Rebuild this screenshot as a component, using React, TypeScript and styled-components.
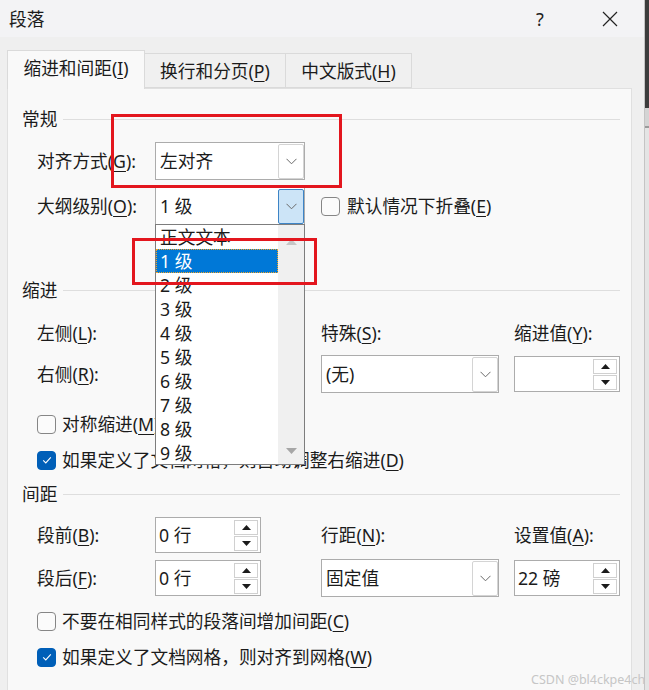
import React from "react";
import styled, { createGlobalStyle } from "styled-components";

const GlobalStyle = createGlobalStyle`
  html, body {
    margin: 0;
    padding: 0;
  }
  body {
    font-family: "Noto Sans", "Noto Sans CJK SC", sans-serif;
    background: #efefef;
    color: #1b1b1b;
    overflow: hidden;
  }
`;

const Screen = styled.div`
  position: relative;
  display: flex;
  width: 649px;
  height: 690px;
  overflow: hidden;
  font-size: 17.7px;
`;

const Dialog = styled.div`
  width: 644px;
  height: 690px;
  border-right: 1px solid #c4c4c4;
  background: #efefef;
  display: flex;
  flex-direction: column;
  overflow: hidden;
`;

const Backdrop = styled.div`
  flex: 1;
  background: linear-gradient(#3c3c3c 0 108px, #d4d4d4 108px 126px, #9a9a9a 126px 128px, #e4e4e4 128px);
`;

const TitleBar = styled.div`
  height: 37px;
  flex-shrink: 0;
  display: flex;
  align-items: center;
  padding-left: 9px;
  background: #f3f3f5;
`;

const Title = styled.span`
  line-height: 24px;
  flex: 1;
`;

const TitleButton = styled.div`
  width: 46px;
  height: 37px;
  display: flex;
  align-items: center;
  justify-content: center;
  font-size: 18px;
  color: #222;
`;

const CloseButton = styled(TitleButton)`
  margin-left: 24px;
  margin-right: 11px;
`;

const TabsArea = styled.div`
  flex: 1;
  display: flex;
  flex-direction: column;
  padding: 13px 12px 0 7px;
`;

const TabList = styled.div`
  display: flex;
  align-items: flex-end;
  height: 38px;
  position: relative;
  z-index: 1;
`;

const Tab = styled.div<{ $active?: boolean; $w: number }>`
  box-sizing: border-box;
  width: ${(p) => p.$w}px;
  height: ${(p) => (p.$active ? 39 : 35)}px;
  margin-bottom: ${(p) => (p.$active ? -1 : 0)}px;
  margin-left: -1px;
  border: 1px solid #dadada;
  border-bottom: ${(p) => (p.$active ? "none" : "1px solid #dadada")};
  background: ${(p) => (p.$active ? "#f9f9f9" : "#f0f0f0")};
  display: flex;
  align-items: center;
  justify-content: center;
  line-height: 24px;
  padding-bottom: ${(p) => (p.$active ? 4 : 0)}px;
  &:first-child {
    margin-left: 0;
  }
`;

const Panel = styled.div`
  flex: 1;
  border: 1px solid #e0e0e0;
  border-bottom: none;
  background: #f9f9f9;
  display: flex;
  flex-direction: column;
`;

const SectionHeader = styled.div<{ $top: number }>`
  display: flex;
  align-items: center;
  height: 24px;
  line-height: 24px;
  margin-top: ${(p) => p.$top}px;
  padding: 0 11px 0 14px;
  flex-shrink: 0;
`;

const HeaderLine = styled.div`
  flex: 1;
  height: 1px;
  margin-left: 6px;
  background: #dedede;
`;

const FormGrid = styled.div<{ $top: number; $gap: number }>`
  display: grid;
  grid-template-columns: 118px 166px 193px 106px;
  grid-auto-rows: 38px;
  row-gap: ${(p) => p.$gap}px;
  margin-top: ${(p) => p.$top}px;
  padding-left: 29px;
  flex-shrink: 0;
`;

const Label = styled.span<{ $col?: number }>`
  grid-column: ${(p) => p.$col ?? 1};
  align-self: center;
  line-height: 24px;
  white-space: nowrap;
`;

const U = styled.span`
  text-decoration: underline;
  text-decoration-thickness: 1px;
  text-underline-offset: 3px;
`;

const Cell = styled.div<{ $col: number; $span?: number }>`
  grid-column: ${(p) => p.$col} / span ${(p) => p.$span ?? 1};
  align-self: center;
  position: relative;
  display: flex;
  align-items: center;
`;

const SelectBox = styled.div<{ $w: number }>`
  box-sizing: border-box;
  width: ${(p) => p.$w}px;
  height: 38px;
  border: 1px solid #acacac;
  background: #fff;
  display: flex;
  align-items: center;
  padding-left: 4px;
`;

const SelectValue = styled.span`
  flex: 1;
  line-height: 24px;
  white-space: nowrap;
`;

const DropButton = styled.div<{ $active?: boolean }>`
  box-sizing: border-box;
  width: 26px;
  height: 35px;
  border: 1px solid ${(p) => (p.$active ? "#3d84c6" : "#d4d4d4")};
  border-radius: 2px;
  background: ${(p) => (p.$active ? "#cce4f7" : "#fff")};
  display: flex;
  align-items: center;
  justify-content: center;
`;

const SpinBox = styled.div`
  box-sizing: border-box;
  width: 106px;
  height: 36px;
  border: 1px solid #acacac;
  background: #fff;
  display: flex;
  align-items: center;
  padding-left: 3px;
`;

const SpinButtons = styled.div`
  margin-left: auto;
  margin-right: 2px;
  display: flex;
  flex-direction: column;
  gap: 1px;
`;

const SpinButton = styled.div`
  box-sizing: border-box;
  width: 24px;
  height: 15px;
  border: 1px solid #d0d0d0;
  background: #fff;
  display: flex;
  align-items: center;
  justify-content: center;
`;

const ListPopup = styled.div`
  position: absolute;
  top: 37px;
  left: 0;
  z-index: 10;
  box-sizing: border-box;
  width: 150px;
  height: 241px;
  border: 1px solid #7d7d7d;
  background: #fff;
  display: flex;
  overflow: hidden;
`;

const ListItems = styled.div`
  width: 122px;
`;

const ListItem = styled.div<{ $selected?: boolean }>`
  box-sizing: border-box;
  height: 24px;
  line-height: 23px;
  padding-left: 3px;
  white-space: nowrap;
  background: ${(p) => (p.$selected ? "#0078d7" : "transparent")};
  color: ${(p) => (p.$selected ? "#fff" : "#1b1b1b")};
  border: 1px dotted ${(p) => (p.$selected ? "#f5a623" : "transparent")};
`;

const ScrollTrack = styled.div`
  flex: 1;
  background: #f0f0f0;
  display: flex;
  flex-direction: column;
  align-items: center;
  justify-content: space-between;
  padding: 14px 0 10px;
`;

const CheckRow = styled.div<{ $top: number }>`
  display: flex;
  align-items: center;
  gap: 6px;
  height: 28px;
  margin-top: ${(p) => p.$top}px;
  padding-left: 29px;
  flex-shrink: 0;
`;

const InlineCheck = styled.div`
  display: flex;
  align-items: center;
  gap: 7px;
`;

const CheckText = styled.span`
  line-height: 24px;
  white-space: nowrap;
`;

const Box = styled.div<{ $checked?: boolean }>`
  box-sizing: border-box;
  width: 19px;
  height: 19px;
  border-radius: 4px;
  border: 1px solid ${(p) => (p.$checked ? "#005fb8" : "#868686")};
  background: ${(p) => (p.$checked ? "#005fb8" : "#fbfbfb")};
  display: flex;
  align-items: center;
  justify-content: center;
  flex-shrink: 0;
`;

const RedMark = styled.div<{ $x: number; $y: number; $w: number; $h: number }>`
  position: absolute;
  left: ${(p) => p.$x}px;
  top: ${(p) => p.$y}px;
  width: ${(p) => p.$w}px;
  height: ${(p) => p.$h}px;
  box-sizing: border-box;
  border: 3px solid #e3161e;
  z-index: 20;
  pointer-events: none;
`;

const Watermark = styled.div`
  position: absolute;
  left: 531px;
  top: 671px;
  font-family: "Noto Sans", sans-serif;
  font-size: 12.5px;
  color: #c6c6c6;
  white-space: nowrap;
`;

const Chevron = () => (
  <svg width="11" height="7" viewBox="0 0 11 7">
    <polyline points="0.5,0.8 5.5,5.8 10.5,0.8" fill="none" stroke="#6a6a6a" strokeWidth="1" />
  </svg>
);

const Tri = ({ up, color = "#1b1b1b", w = 9, h = 5 }: { up?: boolean; color?: string; w?: number; h?: number }) => (
  <svg width={w} height={h} viewBox={`0 0 ${w} ${h}`}>
    <polygon points={up ? `0,${h} ${w / 2},0 ${w},${h}` : `0,0 ${w},0 ${w / 2},${h}`} fill={color} />
  </svg>
);

const Select: React.FC<{ value: string; width: number; active?: boolean }> = ({ value, width, active }) => (
  <SelectBox $w={width}>
    <SelectValue>{value}</SelectValue>
    <DropButton $active={active}>
      <Chevron />
    </DropButton>
  </SelectBox>
);

const Spinner: React.FC<{ value: string }> = ({ value }) => (
  <SpinBox>
    <SelectValue>{value}</SelectValue>
    <SpinButtons>
      <SpinButton>
        <Tri up />
      </SpinButton>
      <SpinButton>
        <Tri />
      </SpinButton>
    </SpinButtons>
  </SpinBox>
);

const Check: React.FC<{ checked?: boolean }> = ({ checked }) => (
  <Box $checked={checked}>
    {checked && (
      <svg width="12" height="12" viewBox="0 0 12 12">
        <polyline points="2.2,6.3 4.8,8.9 9.8,3.4" fill="none" stroke="#fff" strokeWidth="1.1" />
      </svg>
    )}
  </Box>
);

const levels = ["正文文本", "1 级", "2 级", "3 级", "4 级", "5 级", "6 级", "7 级", "8 级", "9 级"];

export default function App() {
  return (
    <>
      <GlobalStyle />
      <Screen>
        <Dialog>
          <TitleBar>
            <Title>段落</Title>
            <TitleButton>?</TitleButton>
            <CloseButton>
              <svg width="16" height="16" viewBox="0 0 16 16">
                <path d="M1 1 L15 15 M15 1 L1 15" stroke="#222" strokeWidth="1.2" />
              </svg>
            </CloseButton>
          </TitleBar>
          <TabsArea>
            <TabList>
              <Tab $active $w={138}>
                缩进和间距(<U>I</U>)
              </Tab>
              <Tab $w={142}>
                换行和分页(<U>P</U>)
              </Tab>
              <Tab $w={127}>
                中文版式(<U>H</U>)
              </Tab>
            </TabList>
            <Panel>
              <SectionHeader $top={18}>
                常规
                <HeaderLine />
              </SectionHeader>
              <FormGrid $top={11} $gap={7}>
                <Label>
                  对齐方式(<U>G</U>):
                </Label>
                <Cell $col={2}>
                  <Select value="左对齐" width={150} />
                </Cell>
                <Label>
                  大纲级别(<U>O</U>):
                </Label>
                <Cell $col={2}>
                  <Select value="1 级" width={150} active />
                  <ListPopup>
                    <ListItems>
                      {levels.map((l, i) => (
                        <ListItem key={l} $selected={i === 1}>
                          {l}
                        </ListItem>
                      ))}
                    </ListItems>
                    <ScrollTrack>
                      <Tri up color="#c6c6c6" w={11} h={6} />
                      <Tri color="#a6a6a6" w={11} h={6} />
                    </ScrollTrack>
                  </ListPopup>
                </Cell>
                <Cell $col={3} $span={2}>
                  <InlineCheck>
                    <Check />
                    <CheckText>
                      默认情况下折叠(<U>E</U>)
                    </CheckText>
                  </InlineCheck>
                </Cell>
              </FormGrid>

              <SectionHeader $top={53}>
                缩进
                <HeaderLine />
              </SectionHeader>
              <FormGrid $top={12} $gap={3}>
                <Label>
                  左侧(<U>L</U>):
                </Label>
                <Cell $col={2}>
                  <Spinner value="" />
                </Cell>
                <Label $col={3}>
                  特殊(<U>S</U>):
                </Label>
                <Label $col={4}>
                  缩进值(<U>Y</U>):
                </Label>
                <Label>
                  右侧(<U>R</U>):
                </Label>
                <Cell $col={2}>
                  <Spinner value="" />
                </Cell>
                <Cell $col={3}>
                  <Select value="(无)" width={178} />
                </Cell>
                <Cell $col={4}>
                  <Spinner value="" />
                </Cell>
              </FormGrid>
              <CheckRow $top={17}>
                <Check />
                <CheckText>
                  对称缩进(<U>M</U>)
                </CheckText>
              </CheckRow>
              <CheckRow $top={8}>
                <Check checked />
                <CheckText>
                  如果定义了文档网格，则自动调整右缩进(<U>D</U>)
                </CheckText>
              </CheckRow>

              <SectionHeader $top={8}>
                间距
                <HeaderLine />
              </SectionHeader>
              <FormGrid $top={10} $gap={5}>
                <Label>
                  段前(<U>B</U>):
                </Label>
                <Cell $col={2}>
                  <Spinner value="0 行" />
                </Cell>
                <Label $col={3}>
                  行距(<U>N</U>):
                </Label>
                <Label $col={4}>
                  设置值(<U>A</U>):
                </Label>
                <Label>
                  段后(<U>F</U>):
                </Label>
                <Cell $col={2}>
                  <Spinner value="0 行" />
                </Cell>
                <Cell $col={3}>
                  <Select value="固定值" width={178} />
                </Cell>
                <Cell $col={4}>
                  <Spinner value="22 磅" />
                </Cell>
              </FormGrid>
              <CheckRow $top={10}>
                <Check />
                <CheckText>
                  不要在相同样式的段落间增加间距(<U>C</U>)
                </CheckText>
              </CheckRow>
              <CheckRow $top={8}>
                <Check checked />
                <CheckText>
                  如果定义了文档网格，则对齐到网格(<U>W</U>)
                </CheckText>
              </CheckRow>

              <SectionHeader $top={16}>
                预览
                <HeaderLine />
              </SectionHeader>
            </Panel>
          </TabsArea>
        </Dialog>
        <Backdrop />
        <RedMark $x={111} $y={114} $w={231} $h={74} />
        <RedMark $x={132} $y={238} $w={185} $h={47} />
        <Watermark>CSDN @bl4ckpe4ch</Watermark>
      </Screen>
    </>
  );
}
